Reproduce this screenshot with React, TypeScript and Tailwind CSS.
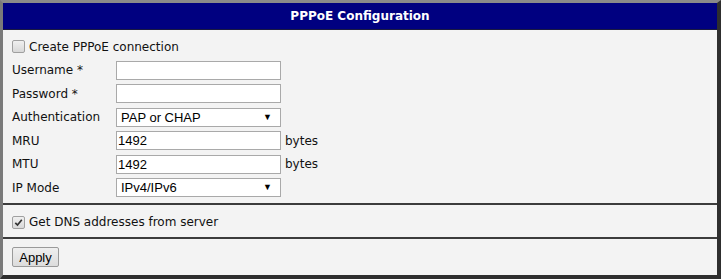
import React from 'react';

const font = { fontFamily: '"DejaVu Sans", Verdana, sans-serif' };
const arial = { fontFamily: '"Liberation Sans", Arial, sans-serif' };

function Check({ checked }: { checked?: boolean }) {
  return (
    <span className="inline-flex items-center justify-center w-[13px] h-[13px] rounded-[2px] border border-[#a0a0a0] bg-gradient-to-b from-[#f0f0f0] to-[#d8d8d8] shrink-0">
      {checked && (
        <svg width="9" height="9" viewBox="0 0 9 9">
          <path d="M1.3 4.8 L3.5 7 L7.8 1.8" fill="none" stroke="#333" strokeWidth="1.7" />
        </svg>
      )}
    </span>
  );
}

function TextBox({ value }: { value?: string }) {
  return (
    <div
      className="w-[165px] h-[19px] bg-white border border-[#a9a9a9] pl-[1px] text-[13px] leading-[17px] text-black"
      style={arial}
    >
      {value}
    </div>
  );
}

function Select({ value }: { value: string }) {
  return (
    <div
      className="w-[165px] h-[19px] bg-white border border-[#a9a9a9] pl-[4px] pr-[8px] flex items-center justify-between text-[13px] text-black"
      style={arial}
    >
      <span className="leading-[17px]">{value}</span>
      <span className="text-[9px] leading-none">▼</span>
    </div>
  );
}

function Row({ label, children, unit }: { label: string; children: React.ReactNode; unit?: string }) {
  return (
    <div className="h-[23.5px] flex items-center">
      <span className="w-[104px] shrink-0">{label}</span>
      {children}
      {unit && <span className="ml-[4px]">{unit}</span>}
    </div>
  );
}

export default function App() {
  return (
    <div
      className="w-[721px] h-[279px] flex flex-col bg-[#f3f3f3] border-t-[3px] border-l-[3px] border-t-[#8a8a8a] border-l-[#7a7a7a] border-r-[4px] border-b-[4px] border-r-[#2e2e2e] border-b-[#2e2e2e] text-[12px] text-[#111]"
      style={font}
    >
      <div className="h-[27px] shrink-0 bg-[#000080] border-b border-[#1a1a40] flex items-center justify-center text-white font-bold text-[12px]">
        PPPoE Configuration
      </div>

      <div className="pt-[5px] pl-[9px] h-[173px] shrink-0">
        <div className="h-[23.5px] flex items-center gap-[4px]">
          <Check />
          <span>Create PPPoE connection</span>
        </div>
        <Row label="Username *">
          <TextBox />
        </Row>
        <Row label="Password *">
          <TextBox />
        </Row>
        <Row label="Authentication">
          <Select value="PAP or CHAP" />
        </Row>
        <Row label="MRU" unit="bytes">
          <TextBox value="1492" />
        </Row>
        <Row label="MTU" unit="bytes">
          <TextBox value="1492" />
        </Row>
        <Row label="IP Mode">
          <Select value="IPv4/IPv6" />
        </Row>
      </div>

      <div className="border-t-2 border-[#3c3c3c] h-[34px] shrink-0 pl-[9px] pt-[2px] flex items-center gap-[4px]">
        <Check checked />
        <span>Get DNS addresses from server</span>
      </div>

      <div className="border-t-2 border-[#3c3c3c] flex-1 pl-[9px] flex items-center">
        <button
          className="w-[47px] h-[20px] border border-[#9a9a9a] rounded-[2px] bg-gradient-to-b from-[#efefef] to-[#dcdcdc] text-[13px] text-black leading-none"
          style={arial}
        >
          Apply
        </button>
      </div>
    </div>
  );
}
